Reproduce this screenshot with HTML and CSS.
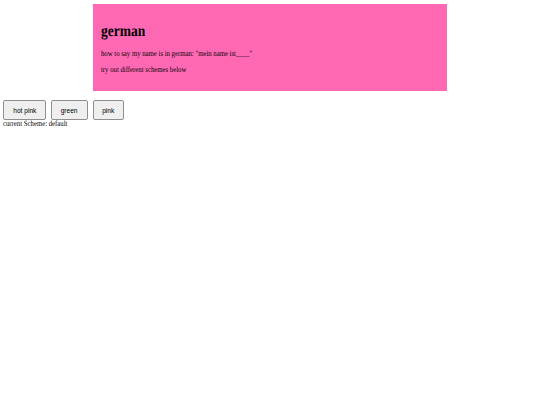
FILE: index.html
```html
<!DOCTYPE html>
<html>
<head>
<meta charset="utf-8">
<link rel="stylesheet" href="styles.css">
</head>
<body>
<div class="card">
  <h1 class="title"><span class="sq">german</span></h1>
  <p class="line"><span class="sq">how to say my name is in german: "mein name ist____"</span></p>
  <p class="line"><span class="sq">try out different schemes below</span></p>
</div>
<div class="buttons">
  <button class="btn btn-hot"><span class="sq">hot pink</span></button>
  <button class="btn btn-green"><span class="sq">green</span></button>
  <button class="btn btn-pink"><span class="sq">pink</span></button>
</div>
<div class="current"><span class="sq">current Scheme: default</span></div>
</body>
</html>
```
FILE: styles.css
```css
html, body {
  margin: 0;
  padding: 0;
  background: #ffffff;
}
body {
  padding: 4px 3px 0;
  font-family: "Liberation Serif", "Times New Roman", serif;
  color: #000;
  text-rendering: geometricPrecision;
}
.sq {
  display: inline-block;
  white-space: nowrap;
  transform: scaleX(0.8333);
  transform-origin: left center;
}
.card {
  width: 354px;
  box-sizing: border-box;
  margin: 0 auto 0 90px;
  background: #ff69b4;
  padding: 19px 8px 17px;
}
.title {
  margin: 0 0 11px;
  font-size: 16.2px;
  line-height: 16px;
  font-weight: bold;
}
.line {
  margin: 0 0 8px;
  font-size: 8.1px;
  line-height: 8px;
}
.line:first-of-type {
  margin-top: 0;
}
.line:last-child {
  margin-bottom: 0;
}
.buttons {
  display: flex;
  gap: 5px;
  margin-top: 9px;
}
.btn {
  height: 20px;
  padding: 0;
  font-family: "Liberation Sans", Arial, sans-serif;
  font-size: 7.9px;
  background: #efefef;
  border: 1px solid #8f8f8f;
  border-radius: 2px;
  color: #000;
  display: flex;
  align-items: center;
  justify-content: center;
}
.btn .sq {
  transform-origin: center center;
}
.btn-hot { width: 43px; }
.btn-green { width: 37px; }
.btn-pink { width: 31px; }
.current {
  font-size: 8.1px;
  line-height: 8px;
}
```
